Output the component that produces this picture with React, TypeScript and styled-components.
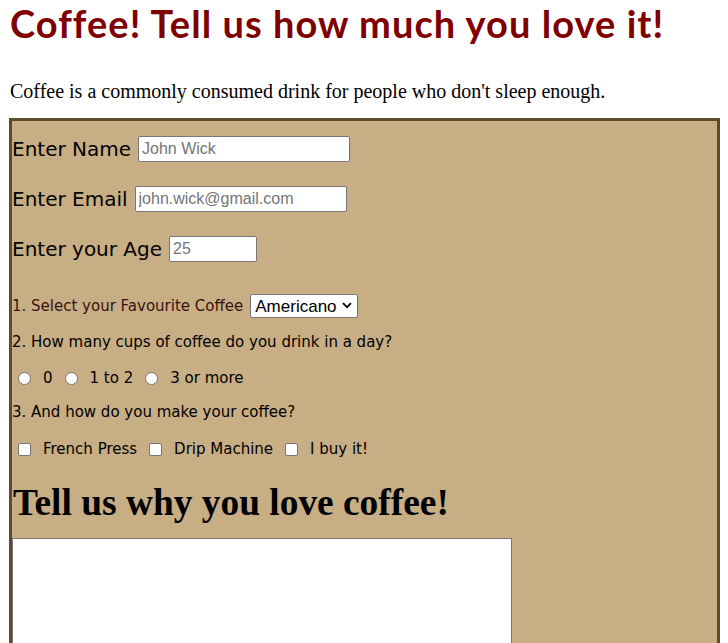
import React from "react";
import styled, { createGlobalStyle } from "styled-components";

const GlobalStyle = createGlobalStyle`
  body {
    margin: 8px;
    font-family: "Liberation Serif", "Times New Roman", serif;
    background: #ffffff;
    color: #000000;
  }
`;

const Title = styled.h1`
  margin: -8px 0 0 2px;
  font-family: Lato, "DejaVu Sans", sans-serif;
  font-weight: 700;
  font-size: 38px;
  letter-spacing: 1.05px;
  line-height: normal;
  color: #800000;
`;

const Intro = styled.p`
  margin: 34px 0 0 2px;
  font-size: 20px;
  line-height: 23px;
`;

const FormBox = styled.form`
  margin: 15px 0 0 1px;
  border: 3px solid #5e4b2d;
  background: #c8ae84;
  padding: 15px 0 0 0;
  font-family: "DejaVu Sans", Verdana, sans-serif;
  height: 600px;
`;

const FieldRow = styled.div`
  display: flex;
  align-items: center;
  gap: 7px;
  height: 26px;
  margin-bottom: 24px;
  font-size: 20px;
`;

const TextInput = styled.input<{ $w: number }>`
  box-sizing: border-box;
  width: ${(p) => p.$w}px;
  height: 26px;
  border: 1px solid #767676;
  border-radius: 2px;
  padding: 1px 3px;
  font-family: "Liberation Sans", Arial, sans-serif;
  font-size: 16px;
  background: #fff;
  &::placeholder {
    color: #757575;
  }
`;

const Question = styled.div<{ $tone?: string }>`
  display: flex;
  align-items: center;
  gap: 7px;
  font-size: 15px;
  line-height: 17px;
  color: ${(p) => p.$tone || "#000"};
`;

const SelectWrap = styled.div`
  position: relative;
  display: inline-flex;
`;

const Select = styled.select`
  box-sizing: border-box;
  height: 24px;
  width: 108px;
  padding: 0 0 0 4px;
  appearance: none;
  -webkit-appearance: none;
  font-family: "Liberation Sans", Arial, sans-serif;
  font-size: 17px;
  border: 1px solid #767676;
  border-radius: 2px;
  background: #fff;
  color: #000;
`;

const Chevron = styled.svg`
  position: absolute;
  right: 6px;
  top: 8px;
  pointer-events: none;
`;

const OptionRow = styled.div`
  display: flex;
  align-items: center;
  font-size: 15px;
  line-height: 17px;
`;

const Choice = styled.label`
  display: flex;
  align-items: center;
  margin-right: 6px;
`;

const Mark = styled.input<{ $round?: boolean }>`
  appearance: none;
  -webkit-appearance: none;
  box-sizing: border-box;
  margin: 0 12px 0 6px;
  width: 13px;
  height: 13px;
  border: 1px solid #767676;
  border-radius: ${(p) => (p.$round ? "50%" : "2px")};
  background: #fff;
`;

const Spacer = styled.div<{ $h: number }>`
  height: ${(p) => p.$h}px;
`;

const SubTitle = styled.h2`
  margin: 0;
  font-family: "Liberation Serif", "Times New Roman", serif;
  font-size: 37.4px;
  line-height: 42px;
  font-weight: 700;
  padding-left: 1px;
`;

const Story = styled.textarea`
  display: block;
  box-sizing: border-box;
  width: 500px;
  height: 200px;
  margin: 0;
  border: 1px solid #767676;
  background: #fff;
  resize: none;
`;

export default function App() {
  return (
    <>
      <GlobalStyle />
      <Title>Coffee! Tell us how much you love it!</Title>
      <Intro>Coffee is a commonly consumed drink for people who don't sleep enough.</Intro>
      <FormBox onSubmit={(e) => e.preventDefault()}>
        <FieldRow>
          <span>Enter Name</span>
          <TextInput $w={212} type="text" placeholder="John Wick" />
        </FieldRow>
        <FieldRow>
          <span>Enter Email</span>
          <TextInput $w={212} type="email" placeholder="john.wick@gmail.com" />
        </FieldRow>
        <FieldRow>
          <span>Enter your Age</span>
          <TextInput $w={88} type="text" placeholder="25" />
        </FieldRow>
        <Spacer $h={8} />
        <Question $tone="#3a1212">
          <span>1. Select your Favourite Coffee</span>
          <SelectWrap>
            <Select defaultValue="Americano">
              <option>Americano</option>
              <option>Espresso</option>
              <option>Latte</option>
              <option>Cappuccino</option>
            </Select>
            <Chevron width="10" height="7" viewBox="0 0 10 7">
              <path d="M1 1.2 L5 5.2 L9 1.2" fill="none" stroke="#000" strokeWidth="1.9" />
            </Chevron>
          </SelectWrap>
        </Question>
        <Spacer $h={16} />
        <Question>2. How many cups of coffee do you drink in a day?</Question>
        <Spacer $h={19} />
        <OptionRow>
          <Choice>
            <Mark $round type="radio" name="cups" />0
          </Choice>
          <Choice>
            <Mark $round type="radio" name="cups" />1 to 2
          </Choice>
          <Choice>
            <Mark $round type="radio" name="cups" />3 or more
          </Choice>
        </OptionRow>
        <Spacer $h={17} />
        <Question>3. And how do you make your coffee?</Question>
        <Spacer $h={20} />
        <OptionRow>
          <Choice>
            <Mark type="checkbox" />French Press
          </Choice>
          <Choice>
            <Mark type="checkbox" />Drip Machine
          </Choice>
          <Choice>
            <Mark type="checkbox" />I buy it!
          </Choice>
        </OptionRow>
        <Spacer $h={24} />
        <SubTitle>Tell us why you love coffee!</SubTitle>
        <Spacer $h={14} />
        <Story />
      </FormBox>
    </>
  );
}
